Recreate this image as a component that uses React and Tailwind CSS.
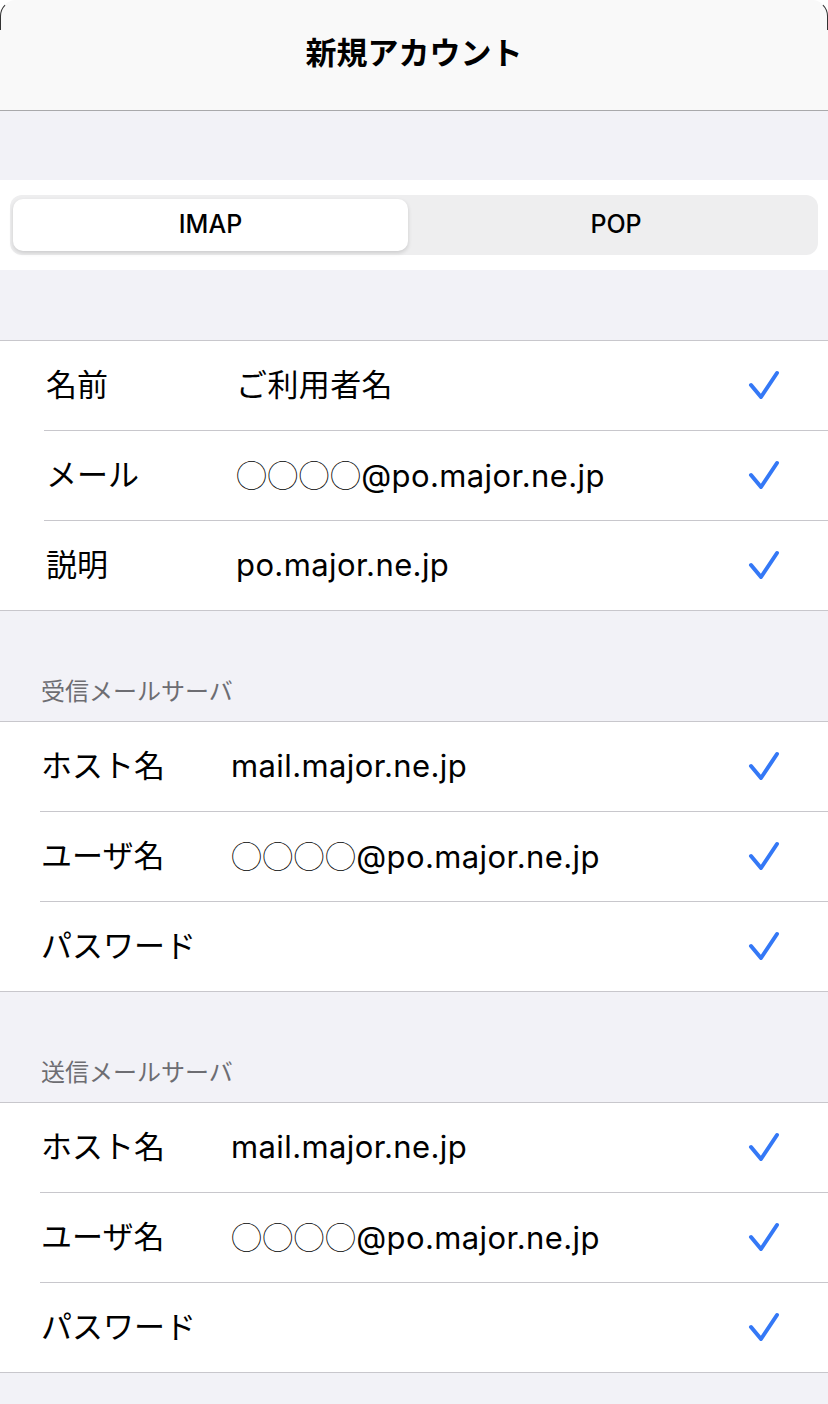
const FONT = { fontFamily: 'Inter, "Noto Sans CJK JP", sans-serif' }

function Check() {
  return (
    <svg width="32" height="32" viewBox="0 0 32 32" className="shrink-0">
      <path d="M3 15 L13 27 L29 3" fill="none" stroke="#3478f6" strokeWidth="4" strokeLinecap="round" strokeLinejoin="round" />
    </svg>
  )
}

// masked address: the four circles are thin full-width glyphs
function Value({ text }) {
  if (!text.startsWith('◯')) return <span>{text}</span>
  return (
    <span>
      <span className="text-[31px] tracking-[0.3px] font-thin [font-family:'Noto_Sans_CJK_JP',sans-serif]">{text.slice(0, 4)}</span>
      {text.slice(4)}
    </span>
  )
}

function Row({ label, value, last, inset }) {
  return (
    <div className={`flex ${last ? 'h-[89px]' : 'h-[90px]'} ${inset.pl}`}>
      <div className={`flex flex-1 items-center pr-[48px] ${last ? '' : 'border-b border-[#c8c7cc]'}`}>
        <div className={`${inset.label} text-[31px] text-black`}>{label}</div>
        <div className="flex-1 text-[31px] text-black tracking-[0.4px]">
          <Value text={value} />
        </div>
        <Check />
      </div>
    </div>
  )
}

function Group({ rows, inset }) {
  return (
    <div className="bg-white border-y border-[#c8c7cc]">
      {rows.map((r, i) => (
        <Row key={i} label={r[0]} value={r[1]} last={i === rows.length - 1} inset={inset} />
      ))}
    </div>
  )
}

function SectionHeader({ children }) {
  return (
    <div className="bg-[#f2f2f7] h-[110px] flex items-end pl-[41px] pb-[11px]">
      <span className="text-[24px] text-[#6d6d72]">{children}</span>
    </div>
  )
}

const INSET_A = { pl: 'pl-[44px]', label: 'w-[192px] pl-[2px]' }
const INSET_B = { pl: 'pl-[40px]', label: 'w-[191px] pl-[1px]' }

const MASKED = '◯◯◯◯@po.major.ne.jp'

const SERVER_ROWS = [
  ['ホスト名', 'mail.major.ne.jp'],
  ['ユーザ名', MASKED],
  ['パスワード', ''],
]

export default function App() {
  return (
    <div className="w-[828px] h-[1404px] bg-white overflow-hidden" style={FONT}>
      {/* Sheet header */}
      <div className="relative h-[111px] bg-[#f9f9f9] rounded-t-[16px] border-b border-[#a9a9ab] flex items-center justify-center">
        <div className="absolute left-0 top-0 w-[16px] h-[30px] border-l border-t border-[#333] rounded-tl-[16px] [border-top-color:transparent]" />
        <div className="absolute right-0 top-0 w-[16px] h-[30px] border-r border-t border-[#333] rounded-tr-[16px] [border-top-color:transparent]" />
        <h1 className="text-[31px] font-bold text-black -mt-[3px]">新規アカウント</h1>
      </div>

      <div className="bg-[#f2f2f7] h-[69px]" />

      {/* IMAP / POP segmented control */}
      <div className="bg-white h-[90px] px-[10px] py-[15px]">
        <div className="h-[60px] rounded-[12px] bg-[#eeeeef] p-[4px] pl-[3px] flex">
          <div className="w-[395px] rounded-[10px] bg-white shadow-[0_2px_4px_rgba(0,0,0,0.15)] flex items-center justify-center text-[25px] font-medium text-black">
            IMAP
          </div>
          <div className="flex-1 flex items-center justify-center pl-[10px] text-[25px] font-medium text-black">
            POP
          </div>
        </div>
      </div>

      <div className="bg-[#f2f2f7] h-[70px]" />

      <Group
        inset={INSET_A}
        rows={[
          ['名前', 'ご利用者名'],
          ['メール', MASKED],
          ['説明', 'po.major.ne.jp'],
        ]}
      />

      <SectionHeader>受信メールサーバ</SectionHeader>
      <Group inset={INSET_B} rows={SERVER_ROWS} />

      <SectionHeader>送信メールサーバ</SectionHeader>
      <Group inset={INSET_B} rows={SERVER_ROWS} />

      <div className="bg-[#f2f2f7] h-[40px]" />
    </div>
  )
}
